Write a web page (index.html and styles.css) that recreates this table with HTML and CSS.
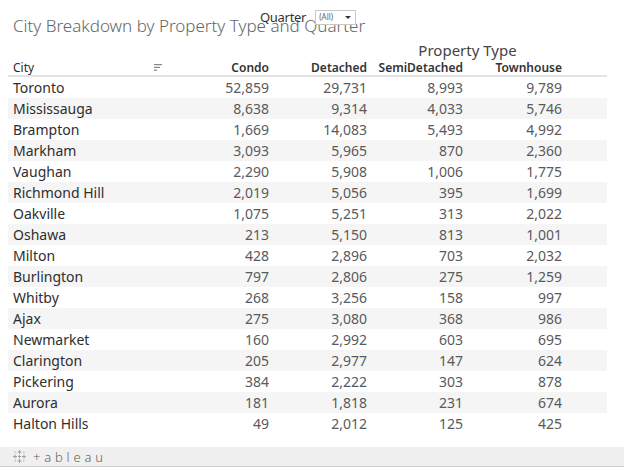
FILE: index.html
```html
<!DOCTYPE html>
<html lang="en">
<head>
<meta charset="utf-8">
<title>City Breakdown by Property Type and Quarter</title>
<link rel="stylesheet" href="styles.css">
</head>
<body>
<div class="viz">
  <div class="title">City Breakdown by Property Type and Quarter</div>
  <div class="filter">
    <span class="filter-label">Quarter</span>
    <span class="filter-box"><span class="filter-value">(All)</span><span class="filter-arrow"></span></span>
  </div>
  <div class="table">
    <div class="row group-row">
      <div class="group-label">Property Type</div>
    </div>
    <div class="row head-row">
      <div class="cell city head-city">City
        <svg class="sort-icon" width="8" height="7" viewBox="0 0 8 7"><rect x="0" y="0" width="8" height="1.2" fill="#888"/><rect x="0" y="2.8" width="6" height="1.2" fill="#888"/><rect x="0" y="5.6" width="3" height="1.2" fill="#888"/></svg>
      </div>
      <div class="cell num head">Condo</div>
      <div class="cell num head">Detached</div>
      <div class="cell num head">SemiDetached</div>
      <div class="cell num head">Townhouse</div>
    </div>
    <div class="row"><div class="cell city">Toronto</div><div class="cell num">52,859</div><div class="cell num">29,731</div><div class="cell num">8,993</div><div class="cell num">9,789</div></div>
    <div class="row band"><div class="cell city">Mississauga</div><div class="cell num">8,638</div><div class="cell num">9,314</div><div class="cell num">4,033</div><div class="cell num">5,746</div></div>
    <div class="row"><div class="cell city">Brampton</div><div class="cell num">1,669</div><div class="cell num">14,083</div><div class="cell num">5,493</div><div class="cell num">4,992</div></div>
    <div class="row band"><div class="cell city">Markham</div><div class="cell num">3,093</div><div class="cell num">5,965</div><div class="cell num">870</div><div class="cell num">2,360</div></div>
    <div class="row"><div class="cell city">Vaughan</div><div class="cell num">2,290</div><div class="cell num">5,908</div><div class="cell num">1,006</div><div class="cell num">1,775</div></div>
    <div class="row band"><div class="cell city">Richmond Hill</div><div class="cell num">2,019</div><div class="cell num">5,056</div><div class="cell num">395</div><div class="cell num">1,699</div></div>
    <div class="row"><div class="cell city">Oakville</div><div class="cell num">1,075</div><div class="cell num">5,251</div><div class="cell num">313</div><div class="cell num">2,022</div></div>
    <div class="row band"><div class="cell city">Oshawa</div><div class="cell num">213</div><div class="cell num">5,150</div><div class="cell num">813</div><div class="cell num">1,001</div></div>
    <div class="row"><div class="cell city">Milton</div><div class="cell num">428</div><div class="cell num">2,896</div><div class="cell num">703</div><div class="cell num">2,032</div></div>
    <div class="row band"><div class="cell city">Burlington</div><div class="cell num">797</div><div class="cell num">2,806</div><div class="cell num">275</div><div class="cell num">1,259</div></div>
    <div class="row"><div class="cell city">Whitby</div><div class="cell num">268</div><div class="cell num">3,256</div><div class="cell num">158</div><div class="cell num">997</div></div>
    <div class="row band"><div class="cell city">Ajax</div><div class="cell num">275</div><div class="cell num">3,080</div><div class="cell num">368</div><div class="cell num">986</div></div>
    <div class="row"><div class="cell city">Newmarket</div><div class="cell num">160</div><div class="cell num">2,992</div><div class="cell num">603</div><div class="cell num">695</div></div>
    <div class="row band"><div class="cell city">Clarington</div><div class="cell num">205</div><div class="cell num">2,977</div><div class="cell num">147</div><div class="cell num">624</div></div>
    <div class="row"><div class="cell city">Pickering</div><div class="cell num">384</div><div class="cell num">2,222</div><div class="cell num">303</div><div class="cell num">878</div></div>
    <div class="row band"><div class="cell city">Aurora</div><div class="cell num">181</div><div class="cell num">1,818</div><div class="cell num">231</div><div class="cell num">674</div></div>
    <div class="row"><div class="cell city">Halton Hills</div><div class="cell num">49</div><div class="cell num">2,012</div><div class="cell num">125</div><div class="cell num">425</div></div>
  </div>
</div>
<div class="footer">
  <svg class="logo-mark" width="15" height="15" viewBox="0 0 15 15">
    <g stroke="#a0a0a0" stroke-width="1">
      <path d="M7.5 1v4M5.5 3h4"/>
      <path d="M7.5 10v4M5.5 12h4"/>
      <path d="M1 7.5h4M3 5.5v4"/>
      <path d="M10 7.5h4M12 5.5v4"/>
      <path d="M7.5 6v3M6 7.5h3"/>
    </g>
    <g fill="#b4b4b4">
      <rect x="2.6" y="2.6" width="1.3" height="1.3"/>
      <rect x="11.1" y="2.6" width="1.3" height="1.3"/>
      <rect x="2.6" y="11.1" width="1.3" height="1.3"/>
      <rect x="11.1" y="11.1" width="1.3" height="1.3"/>
    </g>
  </svg>
  <span class="logo-text">+ableau</span>
</div>
</body>
</html>
```
FILE: styles.css
```css
html, body {
  margin: 0;
  padding: 0;
  background: #ffffff;
}
body {
  width: 624px;
  height: 468px;
  overflow: hidden;
  font-family: "Noto Sans", "Open Sans", sans-serif;
  color: #333333;
}
.viz {
  position: relative;
  height: 447px;
  padding: 0 17px 0 8px;
}
.title {
  padding: 14px 0 0 5px;
  height: 26px;
  line-height: 24px;
  font-size: 17px;
  font-weight: 300;
  color: #666666;
  white-space: nowrap;
}
.filter {
  position: absolute;
  left: 260px;
  top: 8px;
  display: flex;
  align-items: center;
  gap: 9px;
}
.filter-label {
  font-size: 13px;
  line-height: 18px;
  letter-spacing: -0.3px;
  color: #333333;
}
.filter-box {
  width: 32px;
  height: 13px;
  border: 1px solid #c8c8c8;
  background: #fff;
  display: flex;
  align-items: center;
  justify-content: space-between;
  padding: 0 4px 0 3px;
}
.filter-value {
  font-size: 8px;
  line-height: 10px;
  color: #666;
}
.filter-arrow {
  width: 0;
  height: 0;
  border-left: 3px solid transparent;
  border-right: 3px solid transparent;
  border-top: 3px solid #333;
}
.table {
  display: flex;
  flex-direction: column;
}
.row {
  display: grid;
  grid-template-columns: 168px 96px 98px 96px 99px 1fr;
  height: 21px;
  align-items: center;
}
.row.band {
  background: #f5f5f5;
}
.group-row {
  height: 20px;
}
.group-label {
  grid-column: 4 / 6;
  text-align: center;
  font-size: 15px;
  line-height: 18px;
  color: #444;
}
.head-row {
  height: 15px;
  border-bottom: 2px solid #e4e4e4;
  align-items: end;
}
.cell {
  font-size: 14px;
  line-height: 20px;
  white-space: nowrap;
}
.cell.city {
  padding-left: 5px;
  color: #2e2e2e;
  font-weight: 450;
}
.cell.num {
  text-align: right;
  padding-right: 3px;
  color: #5a5a5a;
}
.head-city {
  display: flex;
  justify-content: space-between;
  align-items: center;
  font-size: 12px;
  line-height: 15px;
  font-weight: 400 !important;
  padding-right: 14px;
}
.sort-icon {
  display: block;
}
.cell.head {
  font-size: 12px;
  line-height: 15px;
  font-weight: 600;
  color: #333333;
}
.footer {
  height: 19px;
  background: #f0f0f0;
  border-bottom: 1px solid #cfcfcf;
  display: flex;
  align-items: center;
  padding-left: 12px;
  gap: 6px;
}
.logo-mark {
  display: block;
}
.logo-text {
  font-size: 13px;
  line-height: 16px;
  letter-spacing: 3.8px;
  color: #666;
  font-weight: 300;
}
```
